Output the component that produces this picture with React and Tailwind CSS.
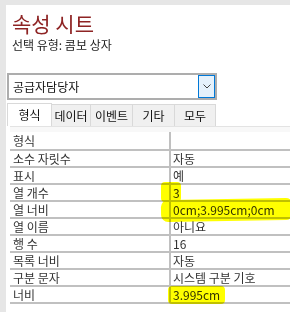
import React from 'react';

const rows = [
  { label: '형식', value: '' },
  { label: '소수 자릿수', value: '자동' },
  { label: '표시', value: '예' },
  { label: '열 개수', value: '3' },
  { label: '열 너비', value: '0cm;3.995cm;0cm' },
  { label: '열 이름', value: '아니요' },
  { label: '행 수', value: '16' },
  { label: '목록 너비', value: '자동' },
  { label: '구분 문자', value: '시스템 구분 기호' },
  { label: '너비', value: '3.995cm' },
];

const tabs = [
  { name: '형식', w: 'w-[45px]', active: true },
  { name: '데이터', w: 'w-[39px]' },
  { name: '이벤트', w: 'w-[42px]' },
  { name: '기타', w: 'w-[42px]' },
  { name: '모두', w: 'w-[41px]' },
];

export default function App() {
  return (
    <div
      className="relative w-[290px] h-[312px] overflow-hidden bg-[#e6e6e6] pt-[5px] pl-[6px] text-[#333]"
      style={{ fontFamily: '"Noto Sans CJK KR", "Noto Sans", sans-serif' }}
    >
      <div className="h-full bg-white flex flex-col">
        {/* Header */}
        <div className="pl-[6px] pt-[7px] text-[21px] leading-[22px] text-[#8e2424]">속성 시트</div>
        <div className="pl-[6px] pt-[3px] text-[12px] leading-[16px] text-[#222]">선택 유형: 콤보 상자</div>

        {/* Combo box */}
        <div className="mt-[20px] ml-[1px] w-[210px] h-[27px] border-2 border-[#adadad] flex items-center">
          <span className="flex-1 pl-[4px] text-[12px] leading-[16px] text-[#111]">공급자담당자</span>
          <div className="w-[17px] h-[23px] border border-[#0078d7] bg-[#e5f1fb] flex items-center justify-center">
            <svg width="8" height="5" viewBox="0 0 8 5">
              <polyline points="0.5,0.5 4,4 7.5,0.5" fill="none" stroke="#444" strokeWidth="1" />
            </svg>
          </div>
        </div>

        {/* Tabs */}
        <div className="mt-[3px] ml-[1px] flex h-[23px]">
          {tabs.map((t) => (
            <div
              key={t.name}
              className={`${t.w} h-full flex items-center justify-center text-[12px] leading-[16px] text-[#111] border-t border-r border-[#d9d9d9] ${
                t.active ? 'bg-white border-l' : 'bg-[#f0f0f0] mt-[1px]'
              }`}
            >
              {t.name}
            </div>
          ))}
        </div>

        {/* Property grid */}
        <div className="ml-[4px] h-[6px] bg-[#f8f8f8] border-t border-[#e3e3e3]" />
        <div className="ml-[4px] flex flex-col">
          {rows.map((r, i) => (
            <div
              key={r.label}
              className={`flex border-b-2 border-[#c0c0c0] text-[12px] ${i === 0 ? 'h-[19px]' : 'h-[17px]'}`}
            >
              <div className="w-[159px] pl-[3px] leading-[15px] flex items-center">{r.label}</div>
              <div className="flex-1 border-l-2 border-[#c0c0c0] pl-[2px] leading-[15px] flex items-center whitespace-nowrap">
                {r.value}
              </div>
            </div>
          ))}
        </div>
      </div>

      {/* Highlighter marks */}
      <div className="absolute left-[161px] top-[182px] w-[20px] h-[20px] rounded-[4px] bg-[#ffff00] mix-blend-multiply" />
      <div className="absolute left-[161px] top-[199px] w-[132px] h-[22px] rounded-[7px] -rotate-1 bg-[#ffff00] mix-blend-multiply" />
      <div className="absolute left-[168px] top-[286px] w-[57px] h-[18px] rounded-[4px] bg-[#ffff00] mix-blend-multiply" />
    </div>
  );
}
